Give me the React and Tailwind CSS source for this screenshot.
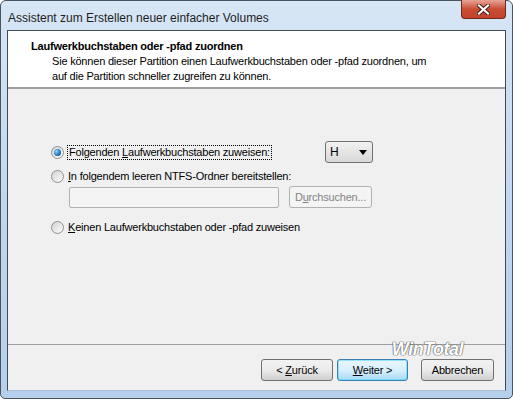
import React from "react";

// ───────────────────────────────────────────────────────────────────────────────
// helpers

const Radio = ({ checked }) => (
  <span className="relative inline-block w-[13px] h-[13px] rounded-full border border-[#8e8f8f] bg-gradient-to-br from-[#d4d4d4] to-[#fbfbfb] shrink-0">
    {checked && (
      <span className="absolute left-[2px] top-[2px] w-[7px] h-[7px] rounded-full bg-[radial-gradient(circle_at_35%_35%,#8fd7ff,#1d6fb5_60%,#0b3f7a)]" />
    )}
  </span>
);

const Btn = ({ children, primary, disabled, className = "" }) => (
  <div
    className={
      "flex items-center justify-center h-[22px] rounded-[3px] border " +
      (primary
        ? "border-[#3c7fb1] bg-gradient-to-b from-[#eaf6fd] via-[#d9f0fc] to-[#a7d9f5] shadow-[inset_0_0_0_1px_#48d8fb88]"
        : disabled
        ? "border-[#adb2b5] bg-[#f4f4f4] text-[#838383]"
        : "border-[#707070] bg-gradient-to-b from-[#f2f2f2] via-[#ebebeb] to-[#cfcfcf]") +
      " " +
      className
    }
  >
    <span>{children}</span>
  </div>
);

// ───────────────────────────────────────────────────────────────────────────────
// page

export default function App() {
  return (
    <div
      className="w-[513px] h-[399px] bg-white text-[11px] text-black tracking-[-0.2px]"
      style={{ fontFamily: '"Liberation Sans", Arial, sans-serif' }}
    >
      {/* fenêtre */}
      <div className="w-[513px] h-[399px] rounded-t-[6px] rounded-b-[5px] border border-[#4a5360] bg-gradient-to-b from-[#d7e6f5] via-[#c1d7ef] to-[#b6cfea] flex flex-col">
        {/* barre de titre */}
        <div className="h-[29px] flex items-start pl-[7px] pr-[6px]">
          <div className="pt-[8px] text-[12px] text-[#1e1e1e] flex-1 tracking-normal">
            Assistent zum Erstellen neuer einfacher Volumes
          </div>
          <div className="mt-[-1px] w-[45px] h-[19px] rounded-b-[4px] border border-[#6e2a20] border-t-0 bg-gradient-to-b from-[#e6a597] via-[#c94c33] to-[#c34329] flex items-center justify-center">
            <svg width="13" height="11" viewBox="0 0 13 11">
              <path d="M2 1.5 L11 9.5 M11 1.5 L2 9.5" stroke="#3c1a14" strokeWidth="4" strokeLinecap="square" />
              <path d="M2 1.5 L11 9.5 M11 1.5 L2 9.5" stroke="#fff" strokeWidth="2.2" strokeLinecap="square" />
            </svg>
          </div>
        </div>

        {/* zone client */}
        <div className="mx-[6px] mb-[7px] flex-1 border border-[#3f4a56] border-b-[#a7bfd8] bg-[#f0f0f0] flex flex-col">
          {/* en-tête */}
          <div className="h-[58px] bg-white border-b-2 border-b-[#a0a0a0] pt-[8px] pl-[23px]">
            <div className="font-bold leading-[14px]">Laufwerkbuchstaben oder -pfad zuordnen</div>
            <div className="pl-[21px] pt-[1px] leading-[15px]">
              Sie können dieser Partition einen Laufwerkbuchstaben oder -pfad zuordnen, um
              <br />
              auf die Partition schneller zugreifen zu können.
            </div>
          </div>

          {/* contenu */}
          <div className="flex-1 pl-[43px] pt-[52px]">
            <div className="flex items-center justify-between h-[22px] w-[322px]">
              <div className="flex items-center">
                <Radio checked />
                <span className="ml-[3px] px-[1px] border border-dotted border-black leading-[13px]">
                  Folgenden <u>L</u>aufwerkbuchstaben zuweisen:
                </span>
              </div>
              <div className="w-[48px] h-[22px] rounded-[3px] border border-[#707070] bg-gradient-to-b from-[#f2f2f2] to-[#d8d8d8] flex items-center px-[4px] text-[12px]">
                <span className="flex-1">H</span>
                <svg width="8" height="5" viewBox="0 0 8 5" className="mr-[1px]">
                  <path d="M0 0 H8 L4 5 Z" fill="#000" />
                </svg>
              </div>
            </div>
            <div className="flex items-center h-[14px] mt-[6px]">
              <Radio />
              <span className="ml-[4px]">
                <u>I</u>n folgendem leeren NTFS-Ordner bereitstellen:
              </span>
            </div>
            <div className="flex items-center mt-[3px] pl-[18px]">
              <div className="w-[210px] h-[21px] border border-[#adb2b5] rounded-[2px] bg-[#f4f4f4]" />
              <Btn disabled className="ml-[10px] w-[83px] h-[21px]">
                D<u>u</u>rchsuchen...
              </Btn>
            </div>
            <div className="flex items-center h-[14px] mt-[12px]">
              <Radio />
              <span className="ml-[4px]">
                <u>K</u>einen Laufwerkbuchstaben oder -pfad zuweisen
              </span>
            </div>
          </div>

          {/* pied */}
          <div className="h-[46px] border-t border-t-[#a0a0a0] relative flex items-start justify-end pt-[14px] pr-[11px]">
            <div
              className="absolute right-[42px] top-[-9px] italic font-bold text-[18px] text-white tracking-[-0.5px]"
              style={{ textShadow: "0 0 1px #666, 0 0 1px #666, 0 0 1px #666, 0 0 1px #666" }}
            >
              WinTotal
            </div>
            <Btn className="w-[72px]">
              &lt; <u>Z</u>urück
            </Btn>
            <Btn primary className="w-[71px] ml-[4px]">
              <u>W</u>eiter &gt;
            </Btn>
            <Btn className="w-[73px] ml-[13px]">Abbrechen</Btn>
          </div>
        </div>
      </div>
    </div>
  );
}
